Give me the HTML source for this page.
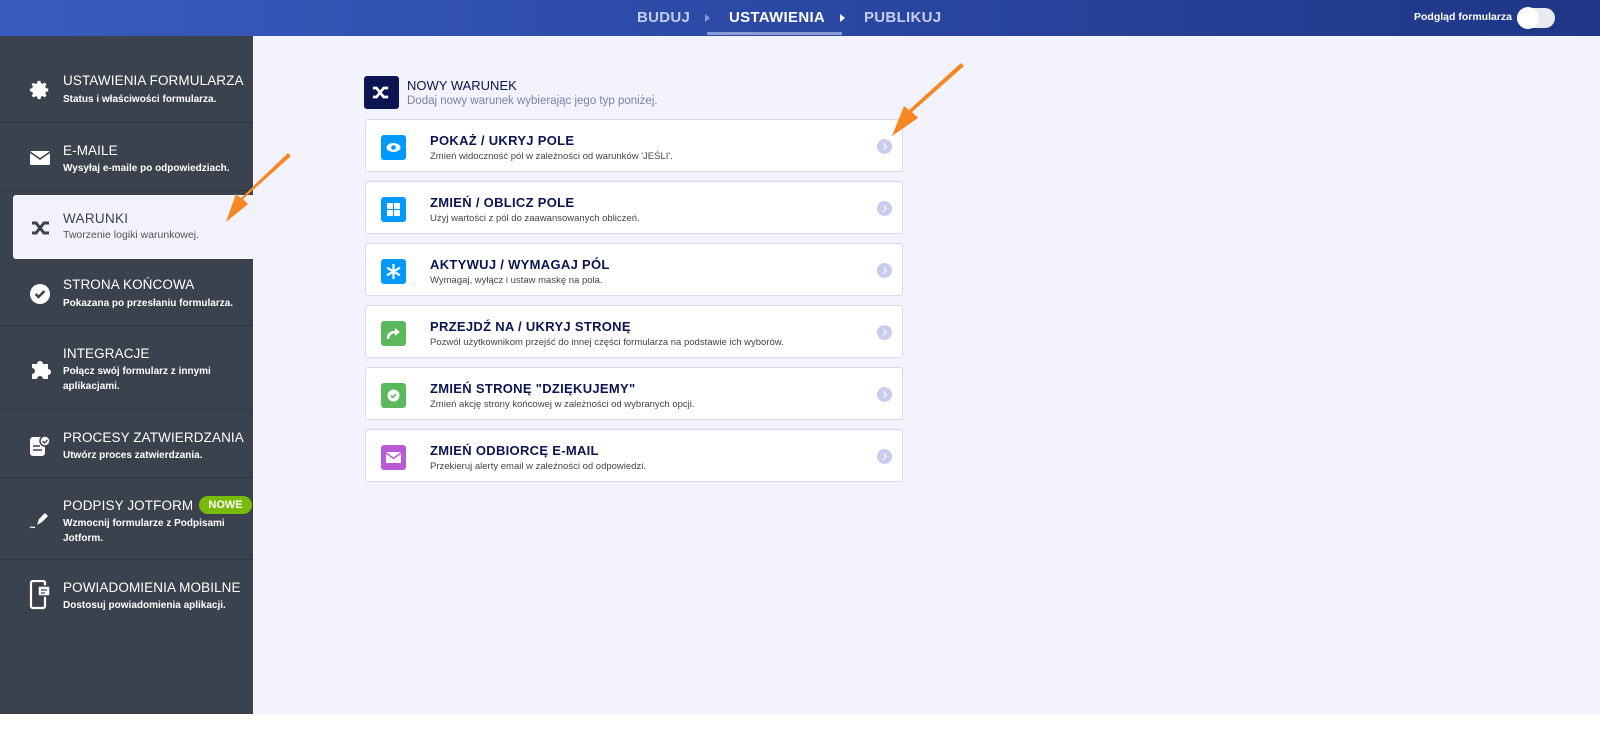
<!DOCTYPE html>
<html><head><meta charset="utf-8"><style>
*{margin:0;padding:0;box-sizing:border-box}
body{width:1600px;height:729px;overflow:hidden;background:#fff;font-family:"Liberation Sans",sans-serif;position:relative}
.hdr{position:absolute;left:0;top:0;width:1600px;height:36px;background:linear-gradient(90deg,#3a5cc0,#2a48a3 50%,#1f3686)}
.nav{position:absolute;top:9px;font-size:15px;font-weight:bold;color:#c5cdee;letter-spacing:.3px;white-space:nowrap}
.side{position:absolute;left:0;top:36px;width:253px;height:678px;background:#3b424d}
.main{position:absolute;left:253px;top:36px;width:1347px;height:678px;background:#f3f3fd}
.it{position:absolute;left:0;width:253px;border-bottom:1px solid #2f353e;color:#fff}
.it .t{position:absolute;left:63px;font-size:13.5px;letter-spacing:.1px;white-space:nowrap}
.it .s{position:absolute;left:63px;font-size:10px;font-weight:bold;line-height:15px;width:180px}
.it svg{position:absolute;left:29px}
.card{position:absolute;left:365px;width:538px;height:53px;background:#fff;border:1px solid #d6d9ef;border-radius:3px}
.card .ic{position:absolute;left:15px;top:15px;width:25px;height:25px;border-radius:3px}
.card .ic svg{position:absolute;left:0;top:0}
.card .t{position:absolute;left:64px;top:13px;font-size:13px;font-weight:bold;color:#0a1551;letter-spacing:.3px;white-space:nowrap}
.card .s{position:absolute;left:64px;top:31px;font-size:9.5px;color:#444;white-space:nowrap}
.card .ch{position:absolute;left:511px;top:19px;width:15px;height:15px;border-radius:50%;background:#c8cdee}
.card .ch:after{content:"";position:absolute;left:4px;top:5px;width:4px;height:4px;border-right:1.5px solid #fff;border-top:1.5px solid #fff;transform:rotate(45deg)}
</style></head><body>
<div class="hdr">
<div class="nav" style="left:637px">BUDUJ</div>
<div style="position:absolute;left:705px;top:14px;border-left:5px solid #8a9ad8;border-top:4px solid transparent;border-bottom:4px solid transparent"></div>
<div class="nav" style="left:729px;color:#fff">USTAWIENIA</div>
<div style="position:absolute;left:707px;top:32px;width:135px;height:3px;background:#8c9cd6"></div>
<div style="position:absolute;left:840px;top:14px;border-left:5px solid #fff;border-top:4px solid transparent;border-bottom:4px solid transparent"></div>
<div class="nav" style="left:864px">PUBLIKUJ</div>
<div style="position:absolute;right:88px;top:11px;font-size:10.5px;font-weight:bold;color:#fff;white-space:nowrap;text-align:right">Podgląd formularza</div>
<div style="position:absolute;left:1517px;top:8px;width:38px;height:20px;border-radius:10px;background:#e8eaee"></div>
<div style="position:absolute;left:1517px;top:7px;width:22px;height:22px;border-radius:50%;background:#fff"></div>
</div>
<div class="side">
<div class="it" style="top:19px;height:68px">
<svg style="top:24px" width="22" height="22" viewBox="0 0 24 24"><path fill="#fff" d="M12 8a4 4 0 100 8 4 4 0 000-8zm9 5.5v-3l-2.6-.5a7 7 0 00-.8-1.9l1.5-2.2-2.1-2.1-2.2 1.5a7 7 0 00-1.9-.8L12.5 2h-3l-.5 2.6a7 7 0 00-1.9.8L4.9 3.9 2.8 6l1.5 2.2a7 7 0 00-.8 1.9L1 10.5v3l2.6.5a7 7 0 00.8 1.9L2.9 18.1 5 20.2l2.2-1.5a7 7 0 001.9.8l.4 2.5h3l.5-2.6a7 7 0 001.9-.8l2.2 1.5 2.1-2.1-1.5-2.2a7 7 0 00.8-1.9z"/></svg>
<div class="t" style="top:18px">USTAWIENIA FORMULARZA</div><div class="s" style="top:37px">Status i właściwości formularza.</div></div>
<div class="it" style="top:87px;height:68px">
<svg style="top:27px" width="22" height="16" viewBox="0 0 22 16"><rect x="1" y="1" width="20" height="14" rx="1.5" fill="#fff"/><path d="M1 2l10 7 10-7" stroke="#3b424d" stroke-width="1.6" fill="none"/></svg>
<div class="t" style="top:20px">E-MAILE</div><div class="s" style="top:38px">Wysyłaj e-maile po odpowiedziach.</div></div>
<div style="position:absolute;left:13px;top:159px;width:240px;height:64px;background:#f1f2fb;border-radius:3px 0 0 3px"></div>
<svg style="position:absolute;left:31px;top:185px" width="20" height="14" viewBox="0 0 20 14"><path d="M1 2h4l8 10h5M1 12h4l8-10h5" stroke="#3b424d" stroke-width="3" fill="none"/></svg>
<div style="position:absolute;left:63px;top:175px;font-size:13.5px;color:#3b424d;letter-spacing:.3px">WARUNKI</div>
<div style="position:absolute;left:63px;top:193px;font-size:10.5px;color:#555">Tworzenie logiki warunkowej.</div>
<div class="it" style="top:223px;height:67px;border-top:0">
<svg style="top:24px" width="22" height="22" viewBox="0 0 22 22"><circle cx="11" cy="11" r="10" fill="#fff"/><path d="M6.5 11l3 3 6-6" stroke="#3b424d" stroke-width="2.4" fill="none"/></svg>
<div class="t" style="top:18px">STRONA KOŃCOWA</div><div class="s" style="top:37px">Pokazana po przesłaniu formularza.</div></div>
<div class="it" style="top:290px;height:84px">
<svg style="top:32px" width="22" height="22" viewBox="0 0 22 22"><path fill="#fff" d="M3 6h5a3 3 0 116 0h5v5a3 3 0 110 6v4h-5a3 3 0 10-6 0H3v-5a3 3 0 100-6z"/></svg>
<div class="t" style="top:20px">INTEGRACJE</div><div class="s" style="top:38px">Połącz swój formularz z innymi aplikacjami.</div></div>
<div class="it" style="top:374px;height:68px">
<svg style="top:24px" width="22" height="24" viewBox="0 0 22 24"><rect x="1" y="3" width="15" height="19" rx="3" fill="#fff"/><path d="M4 12h7M4 16h9" stroke="#3b424d" stroke-width="1.6"/><circle cx="16" cy="7" r="5" fill="#fff" stroke="#3b424d" stroke-width="1.5"/><path d="M13.5 7l2 2 3-3" stroke="#3b424d" stroke-width="1.4" fill="none"/></svg>
<div class="t" style="top:20px">PROCESY ZATWIERDZANIA</div><div class="s" style="top:38px">Utwórz proces zatwierdzania.</div></div>
<div class="it" style="top:442px;height:82px">
<svg style="top:30px" width="22" height="22" viewBox="0 0 22 22"><path d="M1 20c2-3 3 1 5-1" stroke="#fff" stroke-width="1.2" fill="none"/><path fill="#fff" d="M8 17l2-6 6-6 3 3-6 6z"/></svg>
<div class="t" style="top:20px">PODPISY JOTFORM</div>
<div style="position:absolute;left:199px;top:18px;width:53px;height:18px;border-radius:9px;background:#78bb07;color:#fff;font-size:11px;font-weight:bold;text-align:center;line-height:18px">NOWE</div>
<div class="s" style="top:38px;width:170px">Wzmocnij formularze z Podpisami Jotform.</div></div>
<div class="it" style="top:524px;height:80px;border-bottom:0">
<svg style="top:20px" width="24" height="30" viewBox="0 0 24 30"><rect x="2" y="1" width="14" height="27" rx="2" fill="none" stroke="#fff" stroke-width="2.2"/><rect x="9" y="6" width="12" height="10" rx="1.5" fill="#fff" stroke="#3b424d" stroke-width="1.5"/><path d="M12 10h6M12 13h4" stroke="#3b424d" stroke-width="1.3"/></svg>
<div class="t" style="top:20px">POWIADOMIENIA MOBILNE</div><div class="s" style="top:38px">Dostosuj powiadomienia aplikacji.</div></div>
</div>
<div class="main"></div>
<div style="position:absolute;left:364px;top:76px;width:35px;height:33px;border-radius:3px;background:#0a1551"></div>
<svg style="position:absolute;left:372px;top:86px" width="18" height="13" viewBox="0 0 20 14"><path d="M1 2h4l8 10h5M1 12h4l8-10h5" stroke="#fff" stroke-width="3" fill="none"/></svg>
<div style="position:absolute;left:407px;top:78px;font-size:13px;color:#0a1551">NOWY WARUNEK</div>
<div style="position:absolute;left:407px;top:95px;font-size:11.5px;color:#7b80a8">Dodaj nowy warunek wybierając jego typ poniżej.</div>

<div class="card" style="top:119px"><div class="ic" style="background:#0099ff"><svg width="25" height="25" viewBox="0 0 25 25"><ellipse cx="12.5" cy="12.5" rx="7" ry="4.5" fill="#fff"/><circle cx="12.5" cy="12.5" r="2.3" fill="#0099ff"/></svg></div><div class="t">POKAŻ / UKRYJ POLE</div><div class="s">Zmień widoczność pól w zależności od warunków 'JEŚLI'.</div><div class="ch"></div></div>
<div class="card" style="top:181px"><div class="ic" style="background:#0099ff"><svg width="25" height="25" viewBox="0 0 25 25"><rect x="6" y="6" width="6" height="6" fill="#fff"/><rect x="13" y="6" width="6" height="6" fill="#fff"/><rect x="6" y="13" width="6" height="6" fill="#fff"/><rect x="13" y="13" width="6" height="6" fill="#fff"/></svg></div><div class="t">ZMIEŃ / OBLICZ POLE</div><div class="s">Użyj wartości z pól do zaawansowanych obliczeń.</div><div class="ch"></div></div>
<div class="card" style="top:243px"><div class="ic" style="background:#0099ff"><svg width="25" height="25" viewBox="0 0 25 25"><path d="M12.5 5v15M6 8.7l13 7.6M6 16.3l13-7.6" stroke="#fff" stroke-width="2.2"/></svg></div><div class="t">AKTYWUJ / WYMAGAJ PÓL</div><div class="s">Wymagaj, wyłącz i ustaw maskę na pola.</div><div class="ch"></div></div>
<div class="card" style="top:305px"><div class="ic" style="background:#5cb85c"><svg width="25" height="25" viewBox="0 0 25 25"><path d="M7 18c0-5 3-7 8-7" stroke="#fff" stroke-width="2.4" fill="none"/><path d="M14 7l5 4-5 4z" fill="#fff"/></svg></div><div class="t">PRZEJDŹ NA / UKRYJ STRONĘ</div><div class="s">Pozwól użytkownikom przejść do innej części formularza na podstawie ich wyborów.</div><div class="ch"></div></div>
<div class="card" style="top:367px"><div class="ic" style="background:#5cb85c"><svg width="25" height="25" viewBox="0 0 25 25"><circle cx="12.5" cy="12.5" r="6" fill="#fff"/><path d="M9.8 12.6l1.8 1.8 3.3-3.3" stroke="#5cb85c" stroke-width="1.6" fill="none"/></svg></div><div class="t">ZMIEŃ STRONĘ "DZIĘKUJEMY"</div><div class="s">Zmień akcję strony końcowej w zależności od wybranych opcji.</div><div class="ch"></div></div>
<div class="card" style="top:429px"><div class="ic" style="background:#b85ad6"><svg width="25" height="25" viewBox="0 0 25 25"><rect x="5" y="7" width="15" height="11" rx="1" fill="#fff"/><path d="M5 8l7.5 5.5L20 8" stroke="#b85ad6" stroke-width="1.4" fill="none"/></svg></div><div class="t">ZMIEŃ ODBIORCĘ E-MAIL</div><div class="s">Przekieruj alerty email w zależności od odpowiedzi.</div><div class="ch"></div></div>

<svg style="position:absolute;left:0;top:0" width="1600" height="729">
<defs><linearGradient id="g" x1="0" y1="0" x2="1" y2="1"><stop offset="0" stop-color="#ffa040"/><stop offset="1" stop-color="#f06a00"/></linearGradient></defs>
<path d="M291 156L243 199L248 204L226 222L236 194L241 198L288 153Z" fill="url(#g)"/>
<path d="M964 66L912 112L918 118L892 136L904 106L909 110L961 63Z" fill="url(#g)"/>
</svg>
</body></html>
